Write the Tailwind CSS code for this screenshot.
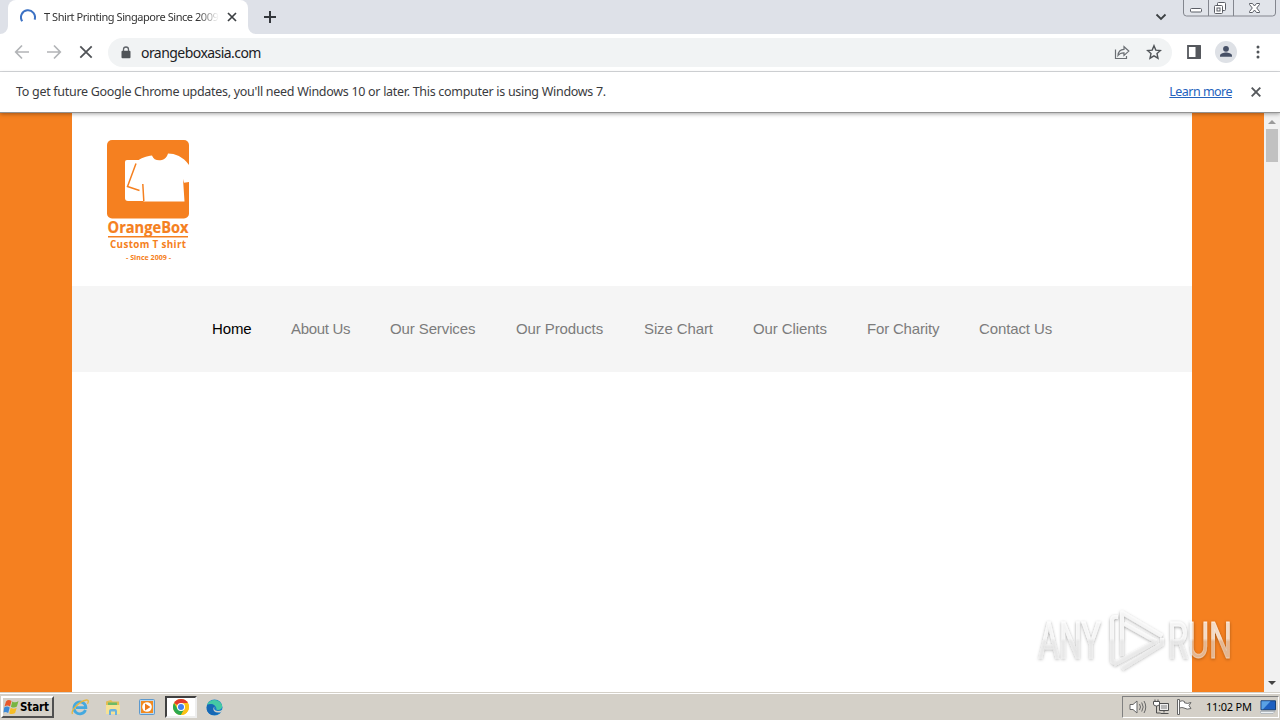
<!DOCTYPE html>
<html lang="en">
<head>
<meta charset="utf-8">
<title>T Shirt Printing Singapore Since 2009</title>
<script src="https://cdn.jsdelivr.net/npm/@tailwindcss/browser@4"></script>
</head>
<body class="w-[1280px] h-[720px] overflow-hidden flex flex-col bg-white font-['Noto_Sans',sans-serif] text-[#202124]">

<!-- Tab strip -->
<header class="relative h-[34px] shrink-0 bg-[#dee1e8] flex">
  <svg class="w-2 h-[34px] shrink-0" viewBox="0 0 8 34"><path d="M8 26a8 8 0 0 1-8 8h8z" fill="#fff"/></svg>
  <div class="w-[240px] h-[34px] bg-white rounded-t-lg flex items-center pl-3 shrink-0">
    <svg class="w-4 h-4 shrink-0" viewBox="0 0 16 16" fill="none" stroke="#3c72c4" stroke-width="2"><path d="M2.200 12.200A7 7 0 1 1 14.600 10.600"/></svg>
    <div class="ml-2 w-[175px] h-4 leading-4 overflow-hidden whitespace-nowrap text-[11px] tracking-[-0.44px] text-[#333] mask-r-from-88%">T Shirt Printing Singapore Since 2009</div>
    <svg class="ml-2 w-[10px] h-[10px] shrink-0" viewBox="0 0 10 10" stroke="#3c4043" stroke-width="1.700"><path d="M1 1l8 8M9 1L1 9"/></svg>
  </div>
  <svg class="w-2 h-[34px] shrink-0" viewBox="0 0 8 34"><path d="M0 26a8 8 0 0 0 8 8H0z" fill="#fff"/></svg>
  <svg class="w-3 h-3 ml-2 mt-[11px]" viewBox="0 0 12 12" stroke="#34373c" stroke-width="2"><path d="M6 0v12M0 6h12"/></svg>
  <svg class="w-[12px] h-[8px] ml-auto mt-[13px] mr-[16px]" viewBox="0 0 12 8" fill="none" stroke="#3c4043" stroke-width="1.800"><path d="M1.500 1.500L6 6l4.500-4.500"/></svg>
  <svg class="w-[97px] h-[18px] shrink-0" viewBox="0 0 97 18" fill="none" stroke="#83868e">
    <path d="M.5 0v13q0 3 3 3h86q3 0 3-3V0M25.500 0v16M50.500 0v16" fill="#e1e4ea"/>
    <rect x="7.500" y="8.500" width="11" height="3.500" rx="1" fill="#fff" stroke="#5b5e66"/>
    <rect x="34.500" y="2.500" width="8" height="8" rx="1" fill="#fff" stroke="#5b5e66"/>
    <rect x="31.500" y="5.500" width="8" height="8" rx="1" fill="#fff" stroke="#5b5e66"/><rect x="34" y="8" width="3" height="3" stroke="#5b5e66"/>
    <path d="M66.500 3.500h3l2 2.500 2-2.500h3v1L73.700 8l2.800 3.500v1h-3l-2-2.500-2 2.500h-3v-1L69.300 8l-2.800-3.500z" fill="#fff" stroke="#5b5e66"/>
  </svg>
</header>

<!-- Toolbar -->
<div class="h-[38px] shrink-0 bg-white border-b border-[#d5d7da] flex items-center pl-[14px]">
  <svg class="w-4 h-4 -mt-px" viewBox="0 0 16 16" fill="none" stroke="#b2b4b7" stroke-width="1.700"><path d="M15 8H2M8 1.500L1.700 8 8 14.500"/></svg>
  <svg class="w-4 h-4 ml-4 -mt-px" viewBox="0 0 16 16" fill="none" stroke="#b2b4b7" stroke-width="1.700"><path d="M1 8h13M8 1.500L14.300 8 8 14.500"/></svg>
  <svg class="w-4 h-4 ml-4 -mt-px" viewBox="0 0 16 16" stroke="#505357" stroke-width="1.800"><path d="M2.300 2.300l11.400 11.400M13.700 2.300L2.300 13.700"/></svg>
  <div class="ml-[14px] w-[1064px] h-[29px] rounded-full bg-[#f1f3f4] flex items-center pl-[13px] pr-[10px]">
    <svg class="w-[10px] h-[13px] -mt-px" viewBox="0 0 10 13"><path d="M2.500 5V3.500a2.500 2.500 0 0 1 5 0V5" fill="none" stroke="#5f6368" stroke-width="1.300"/><rect x=".5" y="4.700" width="9" height="7.500" rx="1" fill="#505458"/></svg>
    <span class="ml-[10px] text-[14px] leading-5 tracking-[-0.55px] whitespace-nowrap">orangeboxasia.com</span>
    <svg class="ml-auto w-4 h-4 -mt-px" viewBox="0 0 16 16" fill="none" stroke="#6b6f74" stroke-width="1.200"><path d="M1.500 5.500v9h11V12"/><path d="M4 11.500C4.300 7.500 6.500 5.500 10 5.400V2.700l4.800 4.400-4.800 4.300V8.800C7.300 8.700 5.500 9.500 4 11.500z"/></svg>
    <svg class="ml-4 w-4 h-4 -mt-px" viewBox="0 0 16 16" fill="none" stroke="#505458" stroke-width="1.400"><path d="M8 1.700l1.800 4.400 4.700.4L11 9.600l1 4.600-4-2.400-4 2.400 1-4.600L1.500 6.500l4.700-.4z"/></svg>
  </div>
  <svg class="ml-[15px] w-[14px] h-[14px] -mt-px" viewBox="0 0 14 14"><path d="M1 1h12v12H1z" fill="none" stroke="#55585d" stroke-width="1.800"/><path d="M8.500 1H14v12H8.500z" fill="#55585d"/></svg>
  <svg class="ml-[14px] w-[22px] h-[22px] -mt-px" viewBox="0 0 22 22"><circle cx="11" cy="11" r="11" fill="#dee1e6"/><circle cx="11" cy="7.800" r="2.900" fill="#465066"/><path d="M5 15.800v-1.300c0-2 3.800-3 6-3s6 1 6 3v1.300z" fill="#465066"/></svg>
  <svg class="ml-[19px] w-1 h-[14px] -mt-px" viewBox="0 0 4 14" fill="#505458"><circle cx="2" cy="2" r="1.500"/><circle cx="2" cy="7" r="1.500"/><circle cx="2" cy="12" r="1.500"/></svg>
</div>

<!-- Update notice -->
<div class="relative z-10 h-[40px] shrink-0 bg-white flex items-center pl-4 pr-[19px] text-[12.5px] shadow-[0_1px_0_#929292,0_2px_4px_rgba(0,0,0,0.35)]">
  <span class="whitespace-nowrap text-[#3a3b3e] tracking-[-0.295px]">To get future Google Chrome updates, you'll need Windows 10 or later. This computer is using Windows 7.</span>
  <a class="ml-auto text-[#2462bd] underline whitespace-nowrap tracking-[-0.53px]">Learn more</a>
  <svg class="ml-[19px] w-[10px] h-[10px]" viewBox="0 0 10 10" stroke="#55585c" stroke-width="1.900"><path d="M.7.7l8.600 8.600M9.300.7L.7 9.300"/></svg>
</div>

<!-- Page -->
<div class="relative h-[580px] shrink-0 flex">
  <main class="w-[1264px] bg-[#f58020] px-[72px]">
    <div class="h-full bg-white">
      <div class="h-[174px] pt-[26px] pl-[33px]">
        <svg class="w-[86px] h-[128px]" viewBox="0 0 86 128" fill="#f58020" font-family="Open Sans, sans-serif">
          <rect x="2" y="2" width="82" height="78.500" rx="5"/>
          <path d="M20 24q0-2 2-2h28l6 38q0 3-3 3H23q-3 0-3-3z" fill="#fff"/>
          <path d="M47 17.500C49 24.500 61 24 63 15.500c7 0 15 3 21 11.500v17l-5 .800-1-3.800 1.500 22.500H38.500L39 46l-1.500 6-13-4.500L32 23.500C35 20 42 18 47 17.500z" fill="#fff"/>
          <path d="M31 25.500L22.500 48.500l12 4M37.800 46l1 17" fill="none" stroke="#f58020" stroke-width="1.500"/>
          <text x="2.500" y="94.500" font-size="16.500" font-weight="700" stroke="#f58020" stroke-width=".2" textLength="81" lengthAdjust="spacingAndGlyphs">OrangeBox</text>
          <rect x="3" y="98" width="80" height="1.500"/>
          <text x="5" y="110" font-size="9.800" font-weight="700" textLength="76" lengthAdjust="spacing">Custom T shirt</text>
          <text x="21" y="121.500" font-size="7.300" font-weight="700" textLength="45" lengthAdjust="spacingAndGlyphs">- Since 2009 -</text>
        </svg>
      </div>
      <nav class="h-[86px] bg-[#f5f5f5] flex items-center pl-[140px] gap-[40px] whitespace-nowrap font-['Liberation_Sans',Arial,sans-serif] text-[15px] tracking-[-0.11px] text-[#7c7c7c]">
        <a class="w-[39px] text-black">Home</a>
        <a class="w-[59px] tracking-[-0.32px]">About Us</a>
        <a class="w-[86px]">Our Services</a>
        <a class="w-[88px]">Our Products</a>
        <a class="w-[69px]">Size Chart</a>
        <a class="w-[74px]">Our Clients</a>
        <a class="w-[72px] tracking-[-0.18px]">For Charity</a>
        <a class="w-[73px]">Contact Us</a>
      </nav>
    </div>
  </main>
  <div class="w-4 bg-[#f1f1f1] flex flex-col items-center pt-2">
    <svg class="w-2 h-1 shrink-0" viewBox="0 0 8 4"><path d="M0 4l4-4 4 4z" fill="#9a9a9a"/></svg>
    <div class="mt-[5px] w-3 h-[33px] bg-[#c1c1c1]"></div>
    <svg class="w-2 h-1 shrink-0 mt-auto mb-[7px]" viewBox="0 0 8 4"><path d="M0 0h8L4 4z" fill="#444"/></svg>
  </div>

  <!-- Watermark over the page -->
  <svg class="absolute left-[1030px] top-[488px] w-[210px] h-[80px]" viewBox="0 0 210 80">
    <defs>
      <linearGradient id="wm" x1="0" y1="0" x2="0" y2="80" gradientUnits="userSpaceOnUse"><stop offset=".48" stop-color="#fff" stop-opacity=".7"/><stop offset=".52" stop-color="#eee" stop-opacity=".5"/></linearGradient>
      <filter id="sh" x="-10%" y="-10%" width="120%" height="130%"><feDropShadow dx="0" dy="1" stdDeviation="1.700" flood-color="#000" flood-opacity=".5"/></filter>
    </defs>
    <g filter="url(#sh)" fill="url(#wm)" font-family="Roboto, sans-serif" font-size="50">
      <g stroke="url(#wm)" stroke-width=".8">
        <text x="8.500" y="57.500" textLength="62" lengthAdjust="spacingAndGlyphs">ANY</text>
        <text x="138" y="57.500" textLength="64" lengthAdjust="spacingAndGlyphs">RUN</text>
      </g>
      <g fill="none" stroke="url(#wm)" stroke-width="4" stroke-linejoin="round">
        <path d="M88 17h-3a3 3 0 0 0-3 3V59q0 4 4 3.500"/>
        <path d="M92 56V12.500l40 23.500M94 23.500l32 18"/>
        <path d="M84 64.500L126 41.500M92 68.500L132 44V38"/>
      </g>
    </g>
  </svg>
</div>

<!-- Taskbar -->
<footer class="h-[28px] shrink-0 bg-[#d4d0c8] border-t border-[#d4d0c8] flex items-center pl-[1px] pt-[1px] shadow-[inset_0_1px_0_#fff]">
  <div class="w-[53px] h-[22px] bg-[#d4d0c8] border-2 border-t-white border-l-white border-r-[#505050] border-b-[#505050] flex items-center">
    <svg class="w-[17px] h-[16px] shrink-0" viewBox="0 0 16 16"><path d="M2.500 2.500Q5-.2 8 2L6.500 7.500Q4 5.500 1 7.500z" fill="#e9582b"/><path d="M8.800 2.400Q12 4.300 15 2l-1.600 5.500Q10.500 9.500 7.400 7.700z" fill="#78b544"/><path d="M.7 8.500Q3.700 6.700 6.200 8.600L4.700 14Q2 12.200 0 13.500z" fill="#3c8ad8"/><path d="M7.200 8.800q3 1.900 6 0L11.600 14q-3 2-5.900.4z" fill="#f6bd27"/></svg>
    <b class="font-['DejaVu_Sans_Condensed','DejaVu_Sans',sans-serif] text-[11.5px] tracking-[-0.1px] text-black leading-4">Start</b>
  </div>
  <svg class="ml-[17px] w-[18px] h-[18px]" viewBox="0 0 18 18" fill="none"><path d="M14.500 12A6 6 0 1 1 14.900 9.600H5" stroke="#45a9df" stroke-width="2.700"/><path d="M1.500 16C-.5 13 8 3 15.500 2c2.500-.2 1.800 2.300 1 3.700" stroke="#e8b63d" stroke-width="1.300"/></svg>
  <svg class="ml-4 w-[16px] h-[17px]" viewBox="0 0 16 17"><path d="M1 2.500L6 1l1.500 1.500H14V15H1z" fill="#e2bd52"/><path d="M3 3.500h9V7H3z" fill="#6cba67"/><path d="M1 6h14v9H1z" fill="#f6e294"/><path d="M4 16v-4q0-2 2-2h4q2 0 2 2v4h-2v-3.500H6V16z" fill="#6ab2df"/></svg>
  <svg class="ml-[18px] w-[16px] h-[16px]" viewBox="0 0 16 16"><rect x=".5" y=".5" width="15" height="15" rx="1" fill="#b9d8f0" stroke="#5c99ce"/><path d="M2 2h12v12H2z" fill="#f18a20"/><circle cx="8" cy="8" r="4.800" fill="#fff"/><path d="M6 4.500L11.500 8 6 11.500z" fill="#ec7a1c"/></svg>
  <div class="ml-[10px] w-[32px] h-[22px] bg-white border-2 border-t-[#404040] border-l-[#404040] border-r-[#eee] border-b-[#eee] flex items-center justify-center">
    <svg class="w-4 h-4" viewBox="0 0 16 16"><circle cx="8" cy="8" r="8" fill="#fbc116"/><path d="M8 8L1.070 4A8 8 0 0 1 14.930 4z" fill="#e33b2e"/><path d="M1.070 4A8 8 0 0 0 8 16l3.460-6L8 8 4.540 10z" fill="#2da94f"/><path d="M8 4h6.930A8 8 0 0 1 8 16l3.460-6z" fill="#fbc116"/><circle cx="8" cy="8" r="4" fill="#fff"/><circle cx="8" cy="8" r="3" fill="#4280ef"/></svg>
  </div>
  <svg class="ml-[9px] w-[17px] h-[17px]" viewBox="0 0 17 17"><circle cx="8.500" cy="8.500" r="8" fill="#167fca"/><path d="M1 6C3 0 12-1 15.500 5c2 4-1 6.500-5 5.800C11 7 7 4.500 1 6z" fill="#45c9a4"/><path d="M1 6c5-2.500 9 0 8 3-2.500 2-.5 5.500 5 4-4 5-12 3.500-13.300-2.500z" fill="#1668b5"/><path d="M8.500 7.500q-1.500 4 3 4.500 3 .3 5-1.500l-1 2.500q-5 1.500-7.500-1-1.500-2.500.5-4.500z" fill="#d4d0c8"/></svg>

  <div class="ml-auto mr-[1px] w-[157px] h-[22px] border border-t-[#808080] border-l-[#808080] border-r-white border-b-white flex items-center pl-[6px]">
    <svg class="w-[18px] h-[16px]" viewBox="0 0 18 16" fill="none" stroke="#666"><path d="M1 5.500h3L8 2v12l-4-3.500H1z" fill="#fff"/><path d="M10.500 5q2 3 0 6M12.700 3.500q3 4.500 0 9M15 2q3.500 6 0 12"/></svg>
    <svg class="ml-[6px] w-[16px] h-[16px]" viewBox="0 0 16 16" fill="none" stroke="#4f4f4f"><path d="M6.500 4.500h9v7h-9z" fill="#eee"/><path d="M8 6h6v4H8z" fill="#b6b6b6" stroke="none"/><path d="M11 11.500v2M7.500 14.500h8M3.500 7v7h4"/><path d="M.5 2.500h6V5q0 2-3 2t-3-2zM2 .5v2M5 .5v2" fill="#fff"/></svg>
    <svg class="ml-[7px] w-[16px] h-[16px]" viewBox="0 0 16 16" fill="#fff" stroke="#666"><path d="M1.500.5v15h2V.5z"/><path d="M3.500 2.500q3-1.500 5 0v1.300q3 1.400 6.500-.3l-2 3 2 3q-4 1.500-7-.5-2-1-4.500 0z"/></svg>
    <span class="ml-[14px] text-[11px] leading-4 tracking-[-0.25px] text-black whitespace-nowrap w-[46px]">11:02 PM</span>
    <svg class="ml-[8px] w-[16px] h-[14px] shrink-0" viewBox="0 0 16 14"><path d="M1 .8h14.500v9H1z" fill="#1d5fc0" stroke="#194074"/><path d="M1.500 1.300h9L3 9.300H1.500z" fill="#5aa2e4"/><path d="M0 11.500h15l-2 2H1z" fill="#ecf1f6" stroke="#8b949f" stroke-width=".5"/></svg>
  </div>
</footer>
</body>
</html>
